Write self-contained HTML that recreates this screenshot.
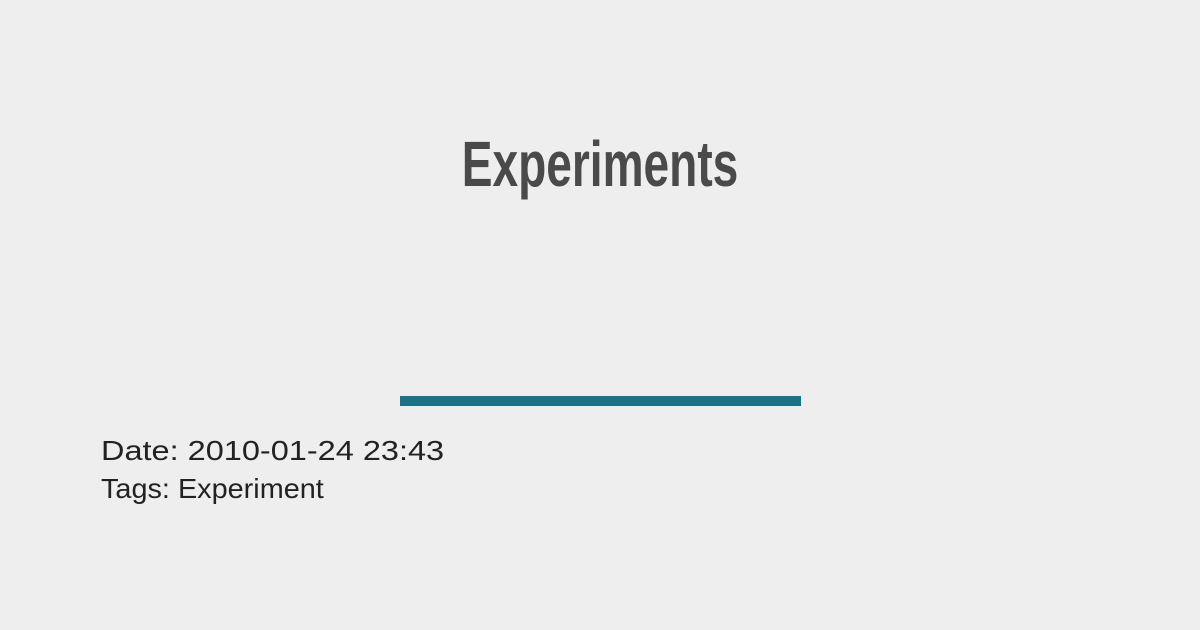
<!DOCTYPE html>
<html><head><style>
body{margin:0;width:1200px;height:630px;background:#eeeeee;position:relative;overflow:hidden;font-family:"Liberation Sans",sans-serif}
h1{position:absolute;left:0;width:1200px;top:124px;margin:0;text-align:center;font-weight:bold;font-size:64px;color:#4a4a4a;line-height:80px;transform:scaleX(0.72);transform-origin:600px 0}
.bar{position:absolute;left:400px;top:396px;width:401px;height:10px;background:#1a7384}
.l{position:absolute;left:101px;font-size:28px;line-height:38px;color:#222;transform-origin:0 0;white-space:nowrap}
</style></head><body>
<h1>Experiments</h1>
<div class="bar"></div>
<div class="l" style="top:432px;transform:scaleX(1.16)">Date: 2010-01-24 23:43</div>
<div class="l" style="top:470px;transform:scaleX(1.03)">Tags: Experiment</div>
</body></html>
